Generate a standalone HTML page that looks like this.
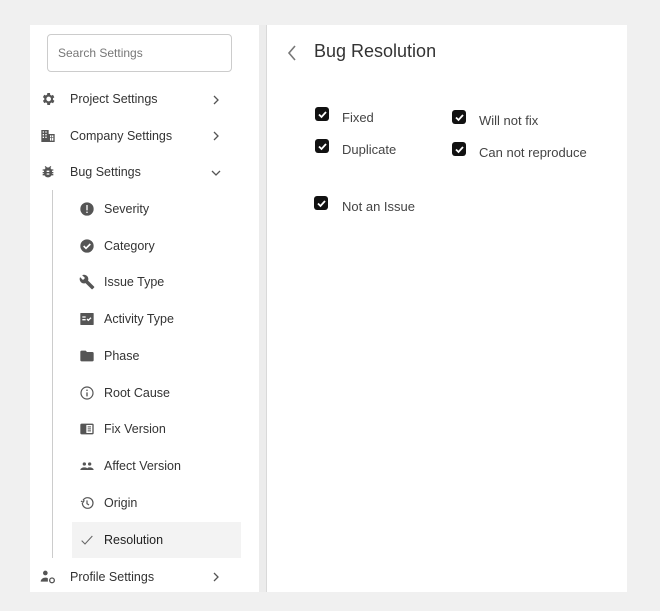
<!DOCTYPE html>
<html><head><style>
body{margin:0;width:660px;height:611px;background:#f0f0f0;font-family:"Liberation Sans",sans-serif;position:relative;overflow:hidden}
.panel{position:absolute;left:30px;top:25px;width:597px;height:567px;background:#fff}
.a{position:absolute}
.it{position:absolute;font-size:12.5px;color:#333;height:20px;line-height:20px}
.ic{position:absolute;width:16px;height:16px}
.chev{position:absolute;left:212px}
.cb{position:absolute;width:14px;height:14px;background:#111;border-radius:3px}
.cb svg{position:absolute;left:1.5px;top:1.5px}
.lb{position:absolute;font-size:13px;color:#444}
</style></head><body>
<div class="panel"></div>
<div class="a" style="left:259px;top:25px;width:8px;height:567px;background:#ececec"></div>
<div class="a" style="left:266px;top:25px;width:1px;height:567px;background:#d9d9d9"></div>
<div class="a" style="left:47px;top:34px;width:183px;height:36px;border:1px solid #ccc;border-radius:4px"></div>
<div class="it" style="left:58px;top:43px;color:#777;font-size:12px">Search Settings</div>
<div class="a" style="left:52px;top:190px;width:1px;height:368px;background:#ccc"></div>
<div class="a" style="left:72px;top:522px;width:169px;height:36px;background:#f3f3f3"></div>

<svg class="ic" style="left:40px;top:91px" viewBox="0 0 24 24"><path fill="#555" d="M19.4 13a7.5 7.5 0 000-2l2.1-1.6-2-3.5-2.5 1a7 7 0 00-1.7-1L15 3h-4l-.4 2.7a7 7 0 00-1.7 1l-2.5-1-2 3.5L6.5 11a7.5 7.5 0 000 2l-2.1 1.6 2 3.5 2.5-1a7 7 0 001.7 1L11 21h4l.4-2.7a7 7 0 001.7-1l2.5 1 2-3.5zM13 15.5a3.5 3.5 0 110-7 3.5 3.5 0 010 7z"/></svg>
<div class="it" style="left:70px;top:89px">Project Settings</div><svg class="chev" style="top:95px" width="8" height="10" viewBox="0 0 8 10"><path d="M2 1l4 4-4 4" fill="none" stroke="#555" stroke-width="1.3"/></svg>
<svg class="ic" style="left:40px;top:128px" viewBox="0 0 24 24"><path fill="#555" d="M2 3h11v18H2zM13 9h9v12h-9z"/><path fill="#fff" d="M4 5h2v2H4zm4 0h2v2H8zM4 9h2v2H4zm4 0h2v2H8zM4 13h2v2H4zm4 0h2v2H8zM15 11h5v8h-5z"/><path fill="#555" d="M17 11h1v8h-1zM15 14h5v1h-5z"/></svg>
<div class="it" style="left:70px;top:126px">Company Settings</div><svg class="chev" style="top:131px" width="8" height="10" viewBox="0 0 8 10"><path d="M2 1l4 4-4 4" fill="none" stroke="#555" stroke-width="1.3"/></svg>
<svg class="ic" style="left:40px;top:164px" viewBox="0 0 24 24"><path fill="#555" d="M20 8h-2.8a6 6 0 00-1.8-2l1.6-1.6-1.4-1.4L13.4 5.2a6 6 0 00-2.8 0L8.4 3 7 4.4 8.6 6a6 6 0 00-1.8 2H4v2h2.1a6 6 0 000 2H4v2h2.1v1H4v2h2.8A6 6 0 0017.2 17H20v-2h-2.1v-1H20v-2h-2.1a6 6 0 000-2H20zM14 16h-4v-2h4zm0-4h-4v-2h4z"/></svg>
<div class="it" style="left:70px;top:162px">Bug Settings</div><svg class="chev" style="left:211px;top:169px" width="10" height="8" viewBox="0 0 10 8"><path d="M1 2l4 4 4-4" fill="none" stroke="#555" stroke-width="1.3"/></svg>

<svg class="ic" style="left:79px;top:201px" viewBox="0 0 24 24"><circle cx="12" cy="12" r="10" fill="#555"/><path fill="#fff" d="M11 6h2v8h-2zm0 10h2v2h-2z"/></svg>
<div class="it" style="left:104px;top:199px">Severity</div>
<svg class="ic" style="left:79px;top:238px" viewBox="0 0 24 24"><circle cx="12" cy="12" r="10" fill="#555"/><path fill="none" stroke="#fff" stroke-width="2.4" d="M7 12l3.5 3.5L17 9"/></svg>
<div class="it" style="left:104px;top:236px">Category</div>
<svg class="ic" style="left:79px;top:274px" viewBox="0 0 24 24"><path fill="#555" d="M22.7 19l-9.1-9.1c.9-2.3.4-5-1.5-6.9-2-2-5-2.4-7.4-1.3L9 6 6 9 1.6 4.7C.4 7.1.9 10.1 2.9 12.1c1.9 1.9 4.6 2.4 6.9 1.5l9.1 9.1c.4.4 1 .4 1.4 0l2.3-2.3c.5-.4.5-1.1.1-1.4z"/></svg>
<div class="it" style="left:104px;top:272px">Issue Type</div>
<svg class="ic" style="left:79px;top:311px" viewBox="0 0 24 24"><rect x="2" y="3" width="20" height="18" rx="1" fill="#555"/><path fill="#fff" d="M5 8h5v2H5zm0 4h5v2H5z"/><path fill="none" stroke="#fff" stroke-width="2" d="M12 12l2 2 4-4"/></svg>
<div class="it" style="left:104px;top:309px">Activity Type</div>
<svg class="ic" style="left:79px;top:348px" viewBox="0 0 24 24"><path fill="#555" d="M10 4H4a2 2 0 00-2 2v12a2 2 0 002 2h16a2 2 0 002-2V8a2 2 0 00-2-2h-8z"/></svg>
<div class="it" style="left:104px;top:346px">Phase</div>
<svg class="ic" style="left:79px;top:385px" viewBox="0 0 24 24"><circle cx="12" cy="12" r="9" fill="none" stroke="#555" stroke-width="1.8"/><path fill="#555" d="M11 11h2v6h-2zm0-4h2v2h-2z"/></svg>
<div class="it" style="left:104px;top:383px">Root Cause</div>
<svg class="ic" style="left:79px;top:421px" viewBox="0 0 24 24"><rect x="2" y="4" width="20" height="16" rx="2" fill="#555"/><rect x="11" y="6" width="9" height="12" fill="#fff"/><path fill="#555" d="M13 8h5v1.5h-5zm0 3h5v1.5h-5zm0 3h5v1.5h-5z"/></svg>
<div class="it" style="left:104px;top:419px">Fix Version</div>
<svg class="ic" style="left:79px;top:458px" viewBox="0 0 24 24"><circle cx="8" cy="9" r="2.5" fill="#555"/><circle cx="16" cy="9" r="2.5" fill="#555"/><path fill="#555" d="M2 18c0-2.5 3-4 6-4s6 1.5 6 4zm10 0c0-1.5.5-2.8 1.5-3.6.8-.3 1.6-.4 2.5-.4 3 0 6 1.5 6 4z"/></svg>
<div class="it" style="left:104px;top:456px">Affect Version</div>
<svg class="ic" style="left:79px;top:495px" viewBox="0 0 24 24"><path fill="none" stroke="#555" stroke-width="1.8" d="M5 12a8 8 0 108-8 8 8 0 00-7 4M3 9l3 2 2-3M12 8v5l3 2"/></svg>
<div class="it" style="left:104px;top:493px">Origin</div>
<svg class="ic" style="left:79px;top:532px" viewBox="0 0 24 24"><path fill="none" stroke="#666" stroke-width="1.6" d="M4 13l5 5L20 6"/></svg>
<div class="it" style="left:104px;top:530px;color:#222">Resolution</div>
<svg class="ic" style="left:40px;top:569px" viewBox="0 0 24 24"><circle cx="8" cy="6" r="3.5" fill="#555"/><path fill="#555" d="M1 19c0-3.5 3.5-6 7-6 1.5 0 2.8.4 3.8 1v5z"/><circle cx="18" cy="17" r="3.5" fill="none" stroke="#555" stroke-width="2"/></svg>
<div class="it" style="left:70px;top:567px">Profile Settings</div><svg class="chev" style="top:572px" width="8" height="10" viewBox="0 0 8 10"><path d="M2 1l4 4-4 4" fill="none" stroke="#555" stroke-width="1.3"/></svg>

<svg class="a" style="left:286px;top:44px" width="12" height="18" viewBox="0 0 12 18"><path d="M9 2L3 9l6 7" fill="none" stroke="#777" stroke-width="1.6"/></svg>
<div class="a" style="left:314px;top:41px;font-size:18px;color:#333">Bug Resolution</div>

<div class="cb" style="left:315px;top:107px"><svg width="11" height="11" viewBox="0 0 11 11"><path d="M2 5.5l2.5 2.5L9 3" fill="none" stroke="#fff" stroke-width="1.8"/></svg></div>
<div class="lb" style="left:342px;top:110px">Fixed</div>
<div class="cb" style="left:452px;top:110px"><svg width="11" height="11" viewBox="0 0 11 11"><path d="M2 5.5l2.5 2.5L9 3" fill="none" stroke="#fff" stroke-width="1.8"/></svg></div>
<div class="lb" style="left:479px;top:113px">Will not fix</div>
<div class="cb" style="left:315px;top:139px"><svg width="11" height="11" viewBox="0 0 11 11"><path d="M2 5.5l2.5 2.5L9 3" fill="none" stroke="#fff" stroke-width="1.8"/></svg></div>
<div class="lb" style="left:342px;top:142px">Duplicate</div>
<div class="cb" style="left:452px;top:142px"><svg width="11" height="11" viewBox="0 0 11 11"><path d="M2 5.5l2.5 2.5L9 3" fill="none" stroke="#fff" stroke-width="1.8"/></svg></div>
<div class="lb" style="left:479px;top:145px">Can not reproduce</div>
<div class="cb" style="left:314px;top:196px"><svg width="11" height="11" viewBox="0 0 11 11"><path d="M2 5.5l2.5 2.5L9 3" fill="none" stroke="#fff" stroke-width="1.8"/></svg></div>
<div class="lb" style="left:342px;top:199px">Not an Issue</div>
</body></html>
